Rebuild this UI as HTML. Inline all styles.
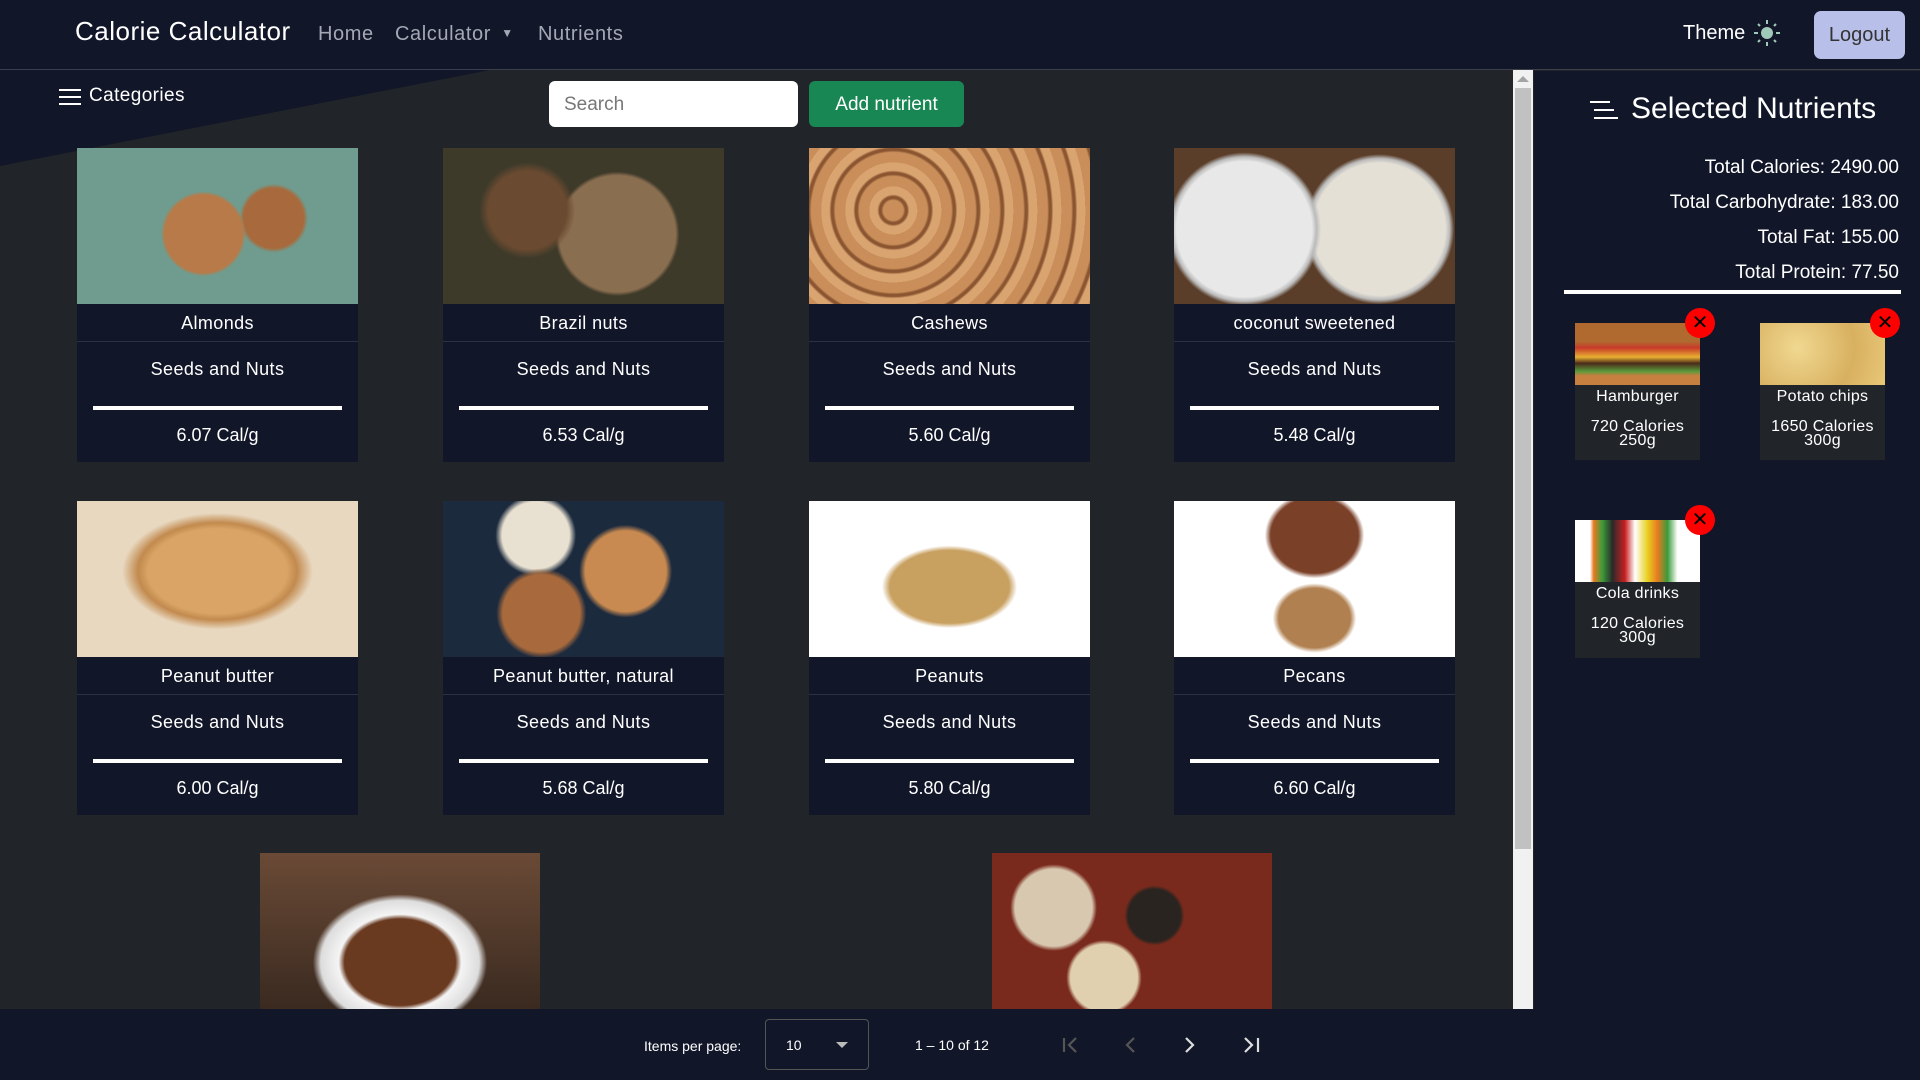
<!DOCTYPE html>
<html><head><meta charset="utf-8"><style>
*{box-sizing:border-box;margin:0;padding:0}
body{width:1920px;height:1080px;overflow:hidden;background:#212529;font-family:"Liberation Sans",sans-serif;color:#fff;position:relative}
.nav{position:absolute;left:0;top:0;width:1920px;height:70px;background:#111629;border-bottom:1px solid #3a3f4b}
.brand{position:absolute;left:75px;top:16px;font-size:26px;letter-spacing:0.5px}
.nl{position:absolute;top:23px;font-size:20px;color:#a4a8b4;letter-spacing:0.6px}
.logout{position:absolute;left:1814px;top:11px;width:91px;height:48px;background:#b8c0ea;border-radius:7px;color:#333;font-size:20px;text-align:center;line-height:48px}
.diag{position:absolute;left:0;top:70px;width:1533px;height:200px;background:#111629;clip-path:polygon(0 0,490px 0,0 96px)}
.card{position:absolute;width:281px;background:#111629}
.card .img{height:156px}
.card .nm{height:38px;border-bottom:1px solid #2c3142;text-align:center;font-size:18px;line-height:38px;letter-spacing:0.4px}
.card .cat{text-align:center;font-size:18px;padding-top:17px;height:64px;letter-spacing:0.4px}
.card .ln{margin:0 16px;height:4px;background:#fff}
.card .cal{text-align:center;font-size:18px;height:52px;line-height:50px}
.sc{position:absolute;width:125px;background:#212529;text-align:center;font-size:16px;letter-spacing:0.3px}
.sc .im{height:62px}
.x{position:absolute;width:30px;height:30px;border-radius:50%;background:#f00;color:#000;text-align:center;line-height:30px;font-size:20px}
</style></head><body>
<div class="nav">
<div class="brand">Calorie Calculator</div>
<div class="nl" style="left:318px">Home</div>
<div class="nl" style="left:395px">Calculator <span style="font-size:12px;vertical-align:3px;margin-left:4px">&#9660;</span></div>
<div class="nl" style="left:538px">Nutrients</div>
<div style="position:absolute;left:1683px;top:22px;font-size:20px">Theme</div>
<svg style="position:absolute;left:1754px;top:20px" width="26" height="26" viewBox="0 0 26 26"><circle cx="13" cy="13" r="6" fill="#9fc9b8"/><g stroke="#9fc9b8" stroke-width="2"><line x1="13" y1="0" x2="13" y2="4"/><line x1="13" y1="22" x2="13" y2="26"/><line x1="0" y1="13" x2="4" y2="13"/><line x1="22" y1="13" x2="26" y2="13"/><line x1="4" y1="4" x2="6" y2="6"/><line x1="20" y1="20" x2="22" y2="22"/><line x1="4" y1="22" x2="6" y2="20"/><line x1="20" y1="6" x2="22" y2="4"/></g></svg>
<div class="logout">Logout</div>
</div>
<div class="diag"></div>
<svg style="position:absolute;left:59px;top:88px" width="22" height="18"><g stroke="#fff" stroke-width="2"><line x1="0" y1="2" x2="22" y2="2"/><line x1="0" y1="9" x2="22" y2="9"/><line x1="0" y1="16" x2="22" y2="16"/></g></svg>
<div style="position:absolute;left:89px;top:85px;font-size:19px;letter-spacing:0.4px">Categories</div>
<div style="position:absolute;left:549px;top:81px;width:249px;height:46px;background:#fff;border-radius:6px;color:#777;font-size:19px;padding:13px 15px">Search</div>
<div style="position:absolute;left:809px;top:81px;width:155px;height:46px;background:#198754;border-radius:6px;font-size:19px;text-align:center;line-height:48px">Add nutrient</div>

<div class="card" style="left:77px;top:148px"><div class="img" style="background:radial-gradient(circle at 45% 55%,#b87a48 0 22%,transparent 24%),radial-gradient(circle at 70% 45%,#a86a3c 0 14%,transparent 16%),#6f9c8e"></div><div class="nm">Almonds</div><div class="cat">Seeds and Nuts</div><div class="ln"></div><div class="cal">6.07 Cal/g</div></div>
<div class="card" style="left:443px;top:148px"><div class="img" style="background:radial-gradient(circle at 30% 40%,#6a4a30 0 18%,transparent 22%),radial-gradient(circle at 62% 55%,#8a6e50 0 30%,transparent 32%),#3e3a2a"></div><div class="nm">Brazil nuts</div><div class="cat">Seeds and Nuts</div><div class="ln"></div><div class="cal">6.53 Cal/g</div></div>
<div class="card" style="left:809px;top:148px"><div class="img" style="background:repeating-radial-gradient(circle at 30% 40%,#c98e5a 0 10px,#8a5530 12px 14px,#d9a470 16px 24px)"></div><div class="nm">Cashews</div><div class="cat">Seeds and Nuts</div><div class="ln"></div><div class="cal">5.60 Cal/g</div></div>
<div class="card" style="left:1174px;top:148px"><div class="img" style="background:radial-gradient(circle at 25% 52%,#e8e8e8 0 30%,#bbb 32%,transparent 34%),radial-gradient(circle at 73% 52%,#e4e0d6 0 30%,#bbb 32%,transparent 34%),#5a3e2a"></div><div class="nm">coconut sweetened</div><div class="cat">Seeds and Nuts</div><div class="ln"></div><div class="cal">5.48 Cal/g</div></div>

<div class="card" style="left:77px;top:501px"><div class="img" style="background:radial-gradient(ellipse at 50% 45%,#d9a466 0 35%,#c28a4e 40%,transparent 48%),#e8d8c0"></div><div class="nm">Peanut butter</div><div class="cat">Seeds and Nuts</div><div class="ln"></div><div class="cal">6.00 Cal/g</div></div>
<div class="card" style="left:443px;top:501px"><div class="img" style="background:radial-gradient(circle at 65% 45%,#c88a50 0 20%,transparent 23%),radial-gradient(circle at 35% 72%,#a86a3c 0 18%,transparent 21%),radial-gradient(circle at 33% 22%,#e8e0d0 0 15%,transparent 18%),#1c2a3e"></div><div class="nm">Peanut butter, natural</div><div class="cat">Seeds and Nuts</div><div class="ln"></div><div class="cal">5.68 Cal/g</div></div>
<div class="card" style="left:809px;top:501px"><div class="img" style="background:radial-gradient(ellipse at 50% 55%,#c8a060 0 30%,transparent 34%),#fff"></div><div class="nm">Peanuts</div><div class="cat">Seeds and Nuts</div><div class="ln"></div><div class="cal">5.80 Cal/g</div></div>
<div class="card" style="left:1174px;top:501px"><div class="img" style="background:radial-gradient(ellipse at 50% 22%,#7a4028 0 22%,transparent 25%),radial-gradient(ellipse at 50% 75%,#b08050 0 18%,transparent 21%),#fff"></div><div class="nm">Pecans</div><div class="cat">Seeds and Nuts</div><div class="ln"></div><div class="cal">6.60 Cal/g</div></div>

<div style="position:absolute;left:260px;top:853px;width:280px;height:156px;background:radial-gradient(ellipse at 50% 70%,#6a3a20 0 28%,#f4f4f4 31%,#ddd 40%,transparent 44%),linear-gradient(#6a4a36,#3a2a20)"></div>
<div style="position:absolute;left:992px;top:853px;width:280px;height:156px;background:radial-gradient(circle at 22% 35%,#d8c8b0 0 16%,transparent 18%),radial-gradient(circle at 58% 40%,#2a2420 0 14%,transparent 16%),radial-gradient(circle at 40% 80%,#e0d0b0 0 16%,transparent 18%),#7a2a1c"></div>

<div style="position:absolute;left:1513px;top:70px;width:20px;height:939px;background:#f1f1f1"></div>
<div style="position:absolute;left:1515px;top:88px;width:16px;height:761px;background:#c1c1c1"></div>
<div style="position:absolute;left:1517px;top:76px;width:0;height:0;border:6px solid transparent;border-bottom-color:#a3a3a3;border-top:0"></div>

<div style="position:absolute;left:0;top:1009px;width:1534px;height:71px;background:#111629;font-size:14px">
<div style="position:absolute;left:644px;top:29px">Items per page:</div>
<div style="position:absolute;left:765px;top:10px;width:104px;height:51px;border:1px solid #555;border-radius:4px"><span style="position:absolute;left:20px;top:17px">10</span><svg style="position:absolute;left:70px;top:22px" width="12" height="7"><path d="M0 0 L12 0 L6 6 Z" fill="#bbb"/></svg></div>
<div style="position:absolute;left:915px;top:28px">1 – 10 of 12</div>
<svg style="position:absolute;left:1060px;top:26px" width="220" height="20" viewBox="0 0 220 20" fill="none" stroke-width="2.2"><g stroke="#555"><path d="M4 3 V17"/><path d="M16 3 L9 10 L16 17"/><path d="M74 3 L67 10 L74 17"/></g><g stroke="#ddd"><path d="M126 3 L133 10 L126 17"/><path d="M185 3 L192 10 L185 17"/><path d="M198 3 V17"/></g></svg>
</div>

<div style="position:absolute;left:1534px;top:71px;width:386px;height:1009px;background:#111629"></div>
<svg style="position:absolute;left:1590px;top:100px" width="28" height="20"><g stroke="#fff" stroke-width="2"><line x1="0" y1="2" x2="20" y2="2"/><line x1="4" y1="10" x2="24" y2="10"/><line x1="4" y1="18" x2="28" y2="18"/></g></svg>
<div style="position:absolute;left:1631px;top:92px;font-size:30px">Selected Nutrients</div>
<div style="position:absolute;right:21px;top:150px;text-align:right;font-size:19px;line-height:35px">Total Calories: 2490.00<br>Total Carbohydrate: 183.00<br>Total Fat: 155.00<br>Total Protein: 77.50</div>
<div style="position:absolute;left:1564px;top:290px;width:337px;height:4px;background:#fff"></div>

<div class="sc" style="left:1575px;top:323px;height:137px"><div class="im" style="background:linear-gradient(#b06a30 0 30%,#c83a2a 40%,#e8b030 55%,#4a2a1a 65%,#5a9a3a 78%,#c88040 85%)"></div><div style="padding-top:3px">Hamburger</div><div style="margin-top:14px;line-height:14px">720 Calories<br>250g</div></div>
<div class="sc" style="left:1760px;top:323px;height:137px"><div class="im" style="background:radial-gradient(circle at 30% 40%,#f0d890,#d8b060 60%,#e8c878)"></div><div style="padding-top:3px">Potato chips</div><div style="margin-top:14px;line-height:14px">1650 Calories<br>300g</div></div>
<div class="sc" style="left:1575px;top:520px;height:138px"><div class="im" style="background:linear-gradient(90deg,#fff 0 12%,#e87a20 15%,#3a9a3a 22%,#2a2a2a 30%,#c82020 40%,#fff 48%,#e8d020 58%,#e87a20 66%,#3a9a3a 74%,#fff 82%)"></div><div style="padding-top:3px">Cola drinks</div><div style="margin-top:14px;line-height:14px">120 Calories<br>300g</div></div>
<div class="x" style="left:1685px;top:308px">✕</div>
<div class="x" style="left:1870px;top:308px">✕</div>
<div class="x" style="left:1685px;top:505px">✕</div>
</body></html>
